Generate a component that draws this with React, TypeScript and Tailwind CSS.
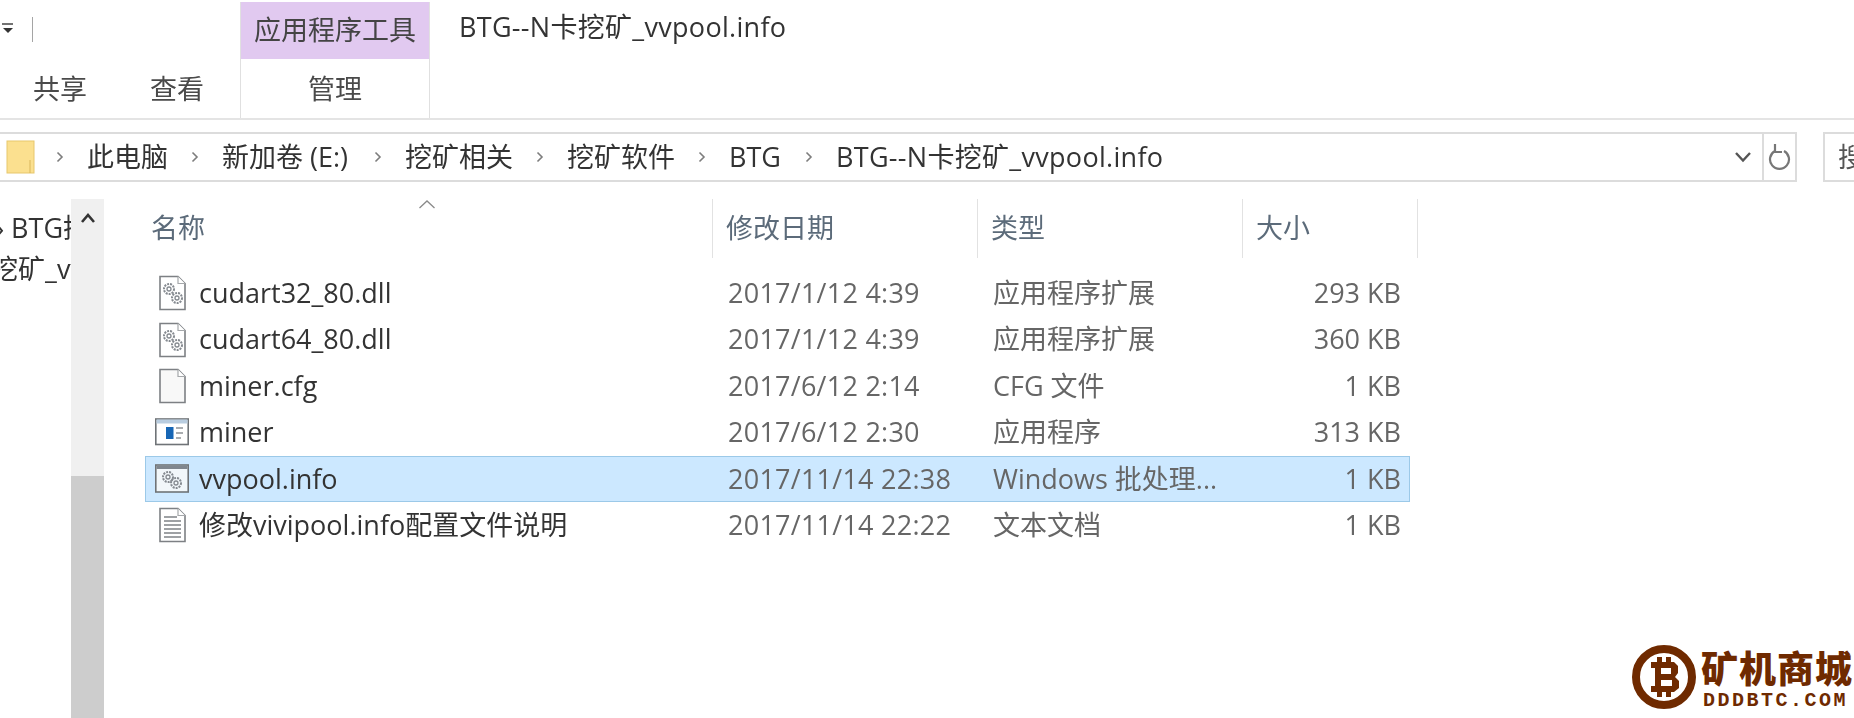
import React from "react";

const FONT = '"Open Sans","Noto Sans CJK SC",sans-serif';

function Gear({ cx, cy }: { cx: number; cy: number }) {
  return (
    <g fill="none" stroke="#858a90" strokeWidth="1.3">
      <circle cx={cx} cy={cy} r="5" strokeDasharray="2 1" strokeWidth="2" />
      <circle cx={cx} cy={cy} r="2" />
    </g>
  );
}

function Sheet({ children, fill = "#fff" }: { children?: React.ReactNode; fill?: string }) {
  return (
    <svg width="34" height="36" viewBox="0 0 34 36" className="shrink-0">
      <path d="M5 1.5H23L30 8.5V34.5H5Z" fill={fill} stroke="#7d8084" strokeWidth="1.6" />
      <path d="M23 1.5V8.5H30" fill="#fff" stroke="#a5a8ab" strokeWidth="1.2" />
      {children}
    </svg>
  );
}

function DllIcon() {
  return (
    <Sheet>
      <Gear cx={14} cy={14} />
      <Gear cx={22} cy={23} />
    </Sheet>
  );
}

function CfgIcon() {
  return <Sheet fill="#f8f8f8" />;
}

function TxtIcon() {
  return (
    <Sheet>
      <path d="M9 10H22M9 14H26M9 18H26M9 22H26M9 26H26M9 30H26" stroke="#7f8387" strokeWidth="1.5" />
    </Sheet>
  );
}

function AppIcon() {
  return (
    <svg width="34" height="36" viewBox="0 0 34 36" className="shrink-0">
      <rect x="0.8" y="5" width="32.4" height="25.5" fill="#fff" stroke="#6f7377" strokeWidth="1.6" />
      <rect x="1.5" y="5.5" width="31" height="4" fill="#b9cde0" />
      <rect x="11" y="13" width="7.5" height="12" fill="#1766b5" />
      <path d="M21 14H28M21 19H28M21 24H26" stroke="#8e9296" strokeWidth="1.4" />
    </svg>
  );
}

function BatIcon() {
  return (
    <svg width="34" height="36" viewBox="0 0 34 36" className="shrink-0">
      <rect x="0.8" y="4" width="32.4" height="27" fill="#f2f7fa" stroke="#6f7377" strokeWidth="1.6" />
      <rect x="1.5" y="4.5" width="31" height="3.5" fill="#7f868e" />
      <Gear cx={13} cy={16} />
      <Gear cx={21} cy={22} />
    </svg>
  );
}

const rows = [
  { icon: <DllIcon />, name: "cudart32_80.dll", date: "2017/1/12 4:39", type: "应用程序扩展", size: "293 KB" },
  { icon: <DllIcon />, name: "cudart64_80.dll", date: "2017/1/12 4:39", type: "应用程序扩展", size: "360 KB" },
  { icon: <CfgIcon />, name: "miner.cfg", date: "2017/6/12 2:14", type: "CFG 文件", size: "1 KB" },
  { icon: <AppIcon />, name: "miner", date: "2017/6/12 2:30", type: "应用程序", size: "313 KB" },
  { icon: <BatIcon />, name: "vvpool.info", date: "2017/11/14 22:38", type: "Windows 批处理...", size: "1 KB", selected: true },
  { icon: <TxtIcon />, name: "修改vivipool.info配置文件说明", date: "2017/11/14 22:22", type: "文本文档", size: "1 KB" },
];

function Chevron() {
  return (
    <svg width="10" height="14" viewBox="0 0 10 14" className="mx-[22px] shrink-0">
      <path d="M2.5 2.5L7 7L2.5 11.5" fill="none" stroke="#7d7d7d" strokeWidth="1.6" />
    </svg>
  );
}

function Logo() {
  return (
    <div className="absolute left-[1632px] top-[645px] flex gap-[5px] text-[#6f2a00]">
      <svg width="64" height="64" viewBox="0 0 64 64" className="shrink-0">
        <circle cx="32" cy="32" r="28" fill="none" stroke="#6f2a00" strokeWidth="8" />
        <path
          d="M23 17H25V12H30V17H34V12H39V17H42L46 21V28L43 32L47 36V43L42 47H39V52H34V47H30V52H25V47H19V41H23V23H19V17ZM29 23V29H39V23ZM29 35V41H40V35Z"
          fill="#6f2a00"
          fillRule="evenodd"
        />
      </svg>
      <div className="flex flex-col items-start">
        <div className="mt-[3px] h-[38px] text-[37px] leading-[38px] font-black tracking-[1px]" style={{ fontFamily: '"Noto Sans CJK SC",sans-serif' }}>
          矿机商城
        </div>
        <div className="ml-[2px] mt-[8px] h-[13px] text-[20px] leading-[13px] font-bold tracking-[2.5px]" style={{ fontFamily: '"Liberation Mono",monospace' }}>
          DDDBTC.COM
        </div>
      </div>
    </div>
  );
}

export default function App() {
  return (
    <div className="relative h-[718px] w-[1854px] overflow-hidden bg-white">
      <div
        className="flex h-[718px] w-[1854px] flex-col overflow-hidden text-[27px] text-[#3a3a3a] blur-[0.5px]"
        style={{ fontFamily: FONT }}
      >
        {/* ribbon */}
        <div className="flex h-[120px] shrink-0 border-b-2 border-[#e4e4e4] pt-[2px]">
          <div className="flex w-[240px] shrink-0 flex-col">
            <div className="flex h-[57px] items-start pl-[2px] pt-[20px]">
              <svg width="12" height="14" viewBox="0 0 12 14">
                <path d="M0 2H11" stroke="#444" strokeWidth="1.5" />
                <path d="M1 6H11L6 11Z" fill="#333" />
              </svg>
              <div className="ml-[18px] mt-[-5px] h-[25px] w-px bg-[#a5a5a5]" />
            </div>
            <div className="flex items-center pl-[33px] pt-[10px] text-[#4a4a4a]">
              <span className="w-[117px]">共享</span>
              <span>查看</span>
            </div>
          </div>
          <div className="flex w-[190px] shrink-0 flex-col border-x border-[#e0e0e0]">
            <div className="flex h-[57px] items-center justify-center bg-[#e1c9f0] whitespace-nowrap text-[#444]">应用程序工具</div>
            <div className="pt-[10px] text-center text-[#4a4a4a]">管理</div>
          </div>
          <div className="pl-[29px] pt-[6px] leading-[38px] tracking-[0.3px] text-[#333]">BTG--N卡挖矿_vvpool.info</div>
        </div>

        {/* address */}
        <div className="mt-[12px] flex h-[50px] shrink-0 items-stretch">
          <div className="flex w-[1797px] shrink-0 items-center border-y-2 border-r-2 border-[#dcdcdc]">
            <svg width="30" height="34" viewBox="0 0 30 34" className="ml-[6px] shrink-0">
              <rect x="1" y="1" width="27" height="32" fill="#fbe08f" stroke="#e7c76c" />
              <path d="M24 20V33" stroke="#d9b65a" />
            </svg>
            <div className="ml-[-3px] flex items-center whitespace-nowrap text-[#333]">
              <Chevron />
              <span>此电脑</span>
              <Chevron />
              <span className="pr-[3px]">新加卷 (E:)</span>
              <Chevron />
              <span>挖矿相关</span>
              <Chevron />
              <span>挖矿软件</span>
              <Chevron />
              <span className="pr-[1px]">BTG</span>
              <Chevron />
              <span className="tracking-[0.3px]">BTG--N卡挖矿_vvpool.info</span>
            </div>
            <svg width="20" height="14" viewBox="0 0 20 14" className="ml-auto mr-[9px] shrink-0">
              <path d="M3 3L10 10.500L17 3" fill="none" stroke="#555" strokeWidth="2.400" />
            </svg>
            <div className="flex h-full w-[33px] shrink-0 items-center justify-center border-l-2 border-[#dcdcdc]">
              <svg width="24" height="32" viewBox="0 0 24 32">
                <path d="M7 10A9.500 9.500 0 1 0 16 10" fill="none" stroke="#777" strokeWidth="2.200" />
                <path d="M7 3V11H14" fill="none" stroke="#777" strokeWidth="2.200" />
              </svg>
            </div>
          </div>
          <div className="ml-[26px] flex flex-1 items-center overflow-hidden whitespace-nowrap border-y-2 border-l-2 border-[#dcdcdc] pl-[13px] text-[#555]">搜索</div>
        </div>

        {/* body */}
        <div className="mt-[17px] flex min-h-0 flex-1">
          <div className="w-[71px] shrink-0 overflow-hidden whitespace-nowrap text-[#333]">
            <div className="ml-[-4px] mt-[9px] h-[41px]">› BTG挖矿</div>
            <div className="ml-[-24px]">› 挖矿_vvpool</div>
          </div>
          <div className="flex w-[33px] shrink-0 flex-col bg-[#f0f0f0]">
            <div className="flex h-[277px] justify-center pt-[13px]">
              <svg width="16" height="12" viewBox="0 0 16 12">
                <path d="M2 10L8 3L14 10" fill="none" stroke="#333" strokeWidth="2.600" />
              </svg>
            </div>
            <div className="flex-1 bg-[#cdcdcd]" />
          </div>
          <div className="min-w-0 flex-1 pl-[41px]">
            {/* header */}
            <div className="relative flex h-[59px] text-[#5c6b7a]">
              <svg width="18" height="10" viewBox="0 0 18 10" className="absolute left-[273px] top-0">
                <path d="M1.500 9L9 2L16.500 9" fill="none" stroke="#8a8a8a" strokeWidth="1.300" />
              </svg>
              <div className="flex w-[568px] items-center border-r border-[#e2e2e2] pl-[6px]">名称</div>
              <div className="flex w-[265px] items-center border-r border-[#e2e2e2] pl-[13px]">修改日期</div>
              <div className="flex w-[265px] items-center border-r border-[#e2e2e2] pl-[13px]">类型</div>
              <div className="flex w-[175px] items-center border-r border-[#e2e2e2] pl-[13px]">大小</div>
            </div>
            {/* rows */}
            <div className="mt-[12px] flex flex-col">
              {rows.map((r) => (
                <div
                  key={r.name}
                  className={
                    r.selected
                      ? "flex h-[46.400px] w-[1265px] items-center border border-[#9cc9e8] bg-[#cce8ff]"
                      : "flex h-[46.400px] w-[1265px] items-center border border-transparent"
                  }
                >
                  <div className="ml-[9px] flex w-[44px] shrink-0">{r.icon}</div>
                  <div className="w-[529px] shrink-0 truncate text-[#333]">{r.name}</div>
                  <div className="w-[265px] shrink-0 tracking-[0.25px] text-[#666]">{r.date}</div>
                  <div className="w-[286px] shrink-0 whitespace-nowrap text-[#666]">{r.type}</div>
                  <div className="w-[122px] shrink-0 text-right text-[#666]">{r.size}</div>
                </div>
              ))}
            </div>
          </div>
        </div>
      </div>

      <Logo />
    </div>
  );
}
